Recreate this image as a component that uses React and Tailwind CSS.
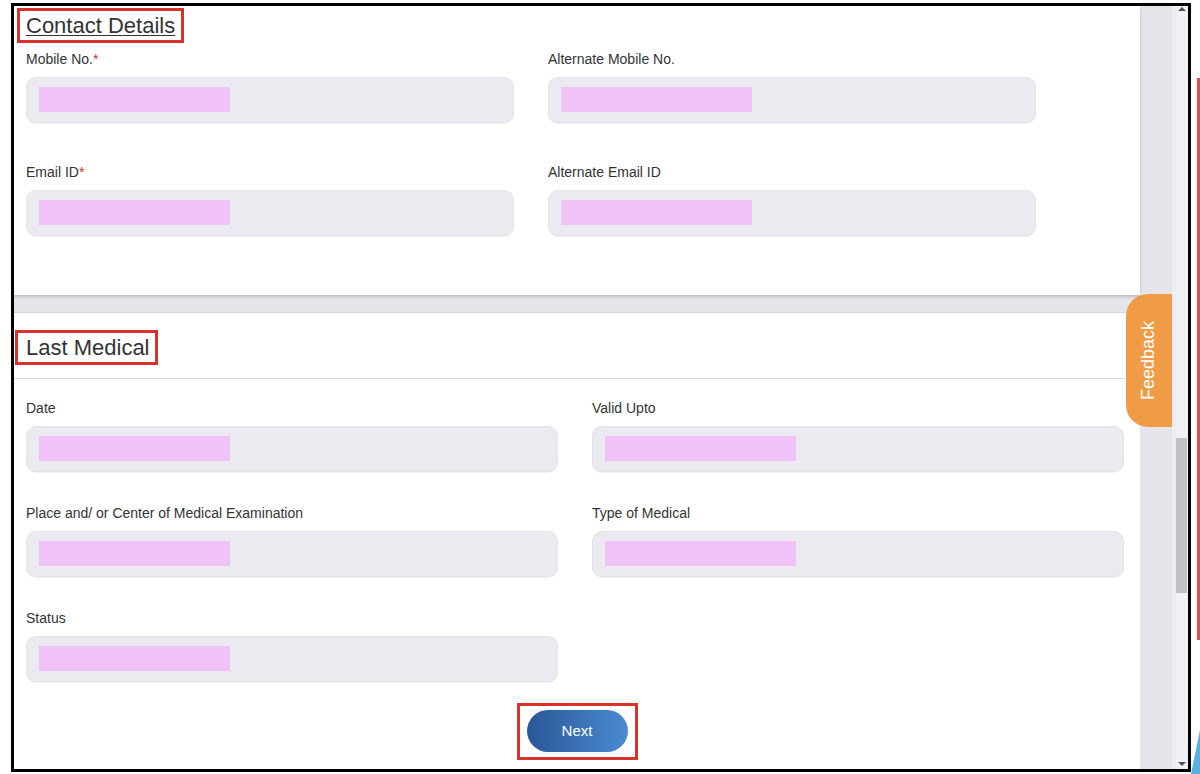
import React from 'react';

const Field = ({ label, required }) => (
  <div>
    <div className="h-[16px] text-[14px] leading-[16px] text-[#333]">
      {label}
      {required && <span className="text-[#d9302c]">*</span>}
    </div>
    <div className="mt-[10px] h-[46px] rounded-[10px] bg-[#ebeaf0] border border-[#e4e3e9] shadow-[0_1px_1px_rgba(0,0,0,0.06)] pl-[12px] pt-[9px]">
      <div className="h-[25px] w-[191px] bg-[#f0c2f8]"></div>
    </div>
  </div>
);

const App = () => {
  return (
    <div className="relative w-[1200px] h-[774px] bg-white overflow-hidden font-['Liberation_Sans',Arial,sans-serif]">
      <div className="relative ml-[11px] mt-[3px] w-[1180px] h-[769px] border-[3px] border-black flex overflow-hidden">
        <div className="w-[1158px] bg-[#e6e5eb] flex flex-col">
          {/* Contact Details */}
          <div className="w-[1126px] h-[289px] shrink-0 bg-white shadow-[0_2px_3px_rgba(0,0,0,0.18)] relative z-10">
            <div className="pt-[2px] pl-[3px]">
              <div className="h-[35px] w-[167px] border-[3px] border-[#d9322c] flex items-center pl-[6px]">
                <span className="text-[22px] leading-none text-[#333] underline underline-offset-[2px] decoration-1">Contact Details</span>
              </div>
            </div>
            <div className="mt-[8px] pl-[12px] grid grid-cols-[488px_488px] gap-x-[34px] gap-y-[41px]">
              <Field label="Mobile No." required />
              <Field label="Alternate Mobile No." />
              <Field label="Email ID" required />
              <Field label="Alternate Email ID" />
            </div>
          </div>
          <div className="h-[18px] shrink-0 w-[1126px] border-b border-[#d6d5db]"></div>
          {/* Last Medical */}
          <div className="w-[1126px] flex-1 bg-white">
            <div className="pt-[17px] pl-[1px]">
              <div className="h-[35px] w-[143px] border-[3px] border-[#d9322c] flex items-center pl-[8px]">
                <span className="text-[22px] leading-none text-[#333]">Last Medical</span>
              </div>
            </div>
            <div className="mt-[13px] border-t border-[#dcdbe0]"></div>
            <div className="mt-[21px] pl-[12px] grid grid-cols-[532px_532px] gap-x-[34px] gap-y-[33px]">
              <Field label="Date" />
              <Field label="Valid Upto" />
              <Field label="Place and/ or Center of Medical Examination" />
              <Field label="Type of Medical" />
              <Field label="Status" />
            </div>
            <div className="mt-[21px] flex justify-center">
              <div className="border-[3px] border-[#d9322c] px-[7px] pt-[4px] pb-[5px]">
                <button className="w-[101px] h-[42px] rounded-full bg-gradient-to-r from-[#2a5796] to-[#4a8bd3] text-white text-[15px]">
                  Next
                </button>
              </div>
            </div>
          </div>
        </div>
        {/* scrollbar */}
        <div className="w-[16px] bg-[#eeedf2] flex">
          <div className="ml-[4px] w-[11px] bg-[#f1f1f3] flex flex-col items-center">
            <div className="mt-[1px] w-0 h-0 border-l-[4px] border-r-[4px] border-b-[4px] border-l-transparent border-r-transparent border-b-[#505050]"></div>
            <div className="mt-[427px] w-full h-[155px] bg-[#c1c1c1]"></div>
            <div className="mt-auto mb-[3px] w-0 h-0 border-l-[4px] border-r-[4px] border-t-[4px] border-l-transparent border-r-transparent border-t-[#505050]"></div>
          </div>
        </div>
        {/* feedback tab */}
        <div className="absolute left-[1112px] top-[288px] w-[46px] h-[133px] bg-[#f09c46] rounded-l-[22px] flex items-center justify-center">
          <span className="-rotate-90 whitespace-nowrap text-white text-[18px]">Feedback</span>
        </div>
      </div>
      <div className="absolute left-[1197px] top-[78px] w-[3px] h-[562px] bg-[#d9534f]"></div>
      <svg className="absolute left-[1188px] top-[728px]" width="12" height="46" viewBox="0 0 12 46">
        <polygon points="12,2 12,46 3,46" fill="#5aaee0" />
      </svg>
    </div>
  );
};

export default App;
